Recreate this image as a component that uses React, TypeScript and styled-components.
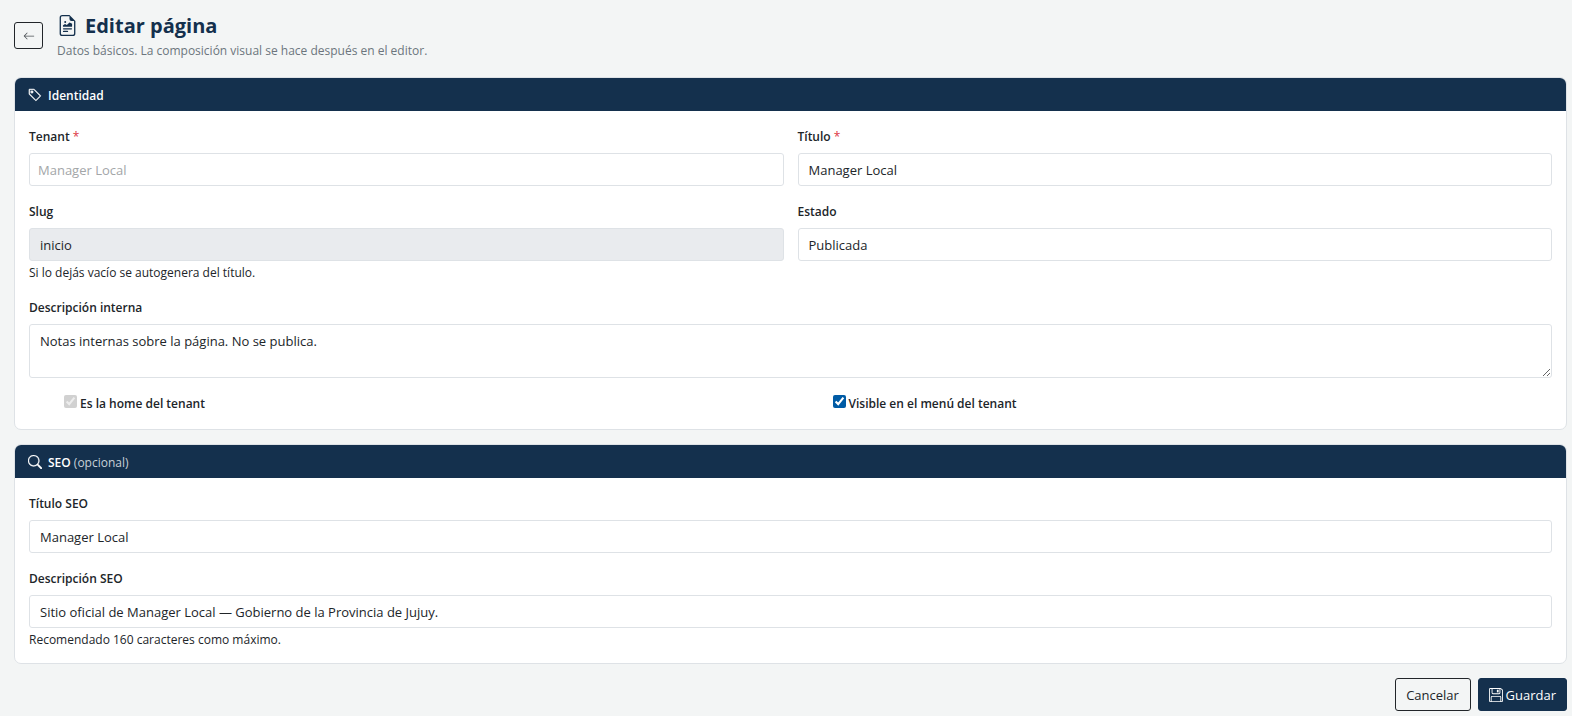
import React from 'react';
import styled, { createGlobalStyle, css } from 'styled-components';
import { BsArrowLeft, BsFileEarmarkRichtext, BsFloppy, BsSearch, BsTag } from 'react-icons/bs';

const GlobalStyle = createGlobalStyle`
  *, *::before, *::after { box-sizing: border-box; }
  body {
    margin: 0;
    background: #f3f5f5;
    color: #212529;
    font-family: "Segoe UI", "Open Sans", "Noto Sans", sans-serif;
    font-size: 13px;
    line-height: 21px;
  }
`;

const Page = styled.form`
  display: flex;
  flex-direction: column;
  gap: 14px;
  padding: 13px 5px 5px 14px;
`;

const PageHeader = styled.header`
  display: flex;
  align-items: flex-start;
  gap: 14px;
  padding-bottom: 2px;
`;

const BackButton = styled.button`
  display: flex;
  align-items: center;
  justify-content: center;
  width: 29px;
  height: 27px;
  margin-top: 9px;
  padding: 0;
  border: 1px solid #212529;
  border-radius: 3px;
  background: transparent;
  color: #4b5054;
`;

const Title = styled.h1`
  display: flex;
  align-items: center;
  gap: 7px;
  margin: 0 0 3px;
  color: #14304d;
  font-size: 20px;
  font-weight: 700;
  line-height: 25px;
`;

const Subtitle = styled.p`
  margin: 0;
  color: #6c757d;
  font-size: 12px;
  line-height: 20px;
`;

const Card = styled.section`
  overflow: hidden;
  border: 1px solid #dee2e6;
  border-radius: 7px;
  background: #fff;
`;

const CardHeader = styled.h2`
  display: flex;
  align-items: center;
  gap: 6px;
  height: 33px;
  margin: 0;
  padding: 1px 13px 0;
  background: #14304d;
  color: #fff;
  font-size: 12px;
  font-weight: 600;
`;

const Optional = styled.span`
  color: #c8d0d8;
  font-weight: 400;
`;

const CardBody = styled.div`
  display: grid;
  grid-template-columns: repeat(2, minmax(0, 1fr));
  gap: 14px;
  padding: 14px;
`;

const Field = styled.div<{ $wide?: boolean }>`
  display: flex;
  flex-direction: column;
  ${({ $wide }) => $wide && 'grid-column: 1 / -1;'}
`;

const Label = styled.label`
  margin-bottom: 5px;
  font-size: 12px;
  font-weight: 600;
  line-height: 23px;
`;

const Required = styled.span`
  color: #dc3545;
  font-weight: 400;
`;

const control = css`
  width: 100%;
  margin: 0;
  border: 1px solid #dee2e6;
  border-radius: 3px;
  background: #fff;
  color: #212529;
  font: inherit;
`;

const Input = styled.input`
  ${control}
  height: 33px;
  padding: 0 10px;
  &:disabled { background: #e9ebee; }
`;

const Select = styled.select<{ $compact?: boolean }>`
  ${control}
  appearance: none;
  height: 33px;
  padding: 1px ${({ $compact }) => ($compact ? 8 : 10)}px 0;
  &:disabled { color: #a3a6a8; opacity: 1; }
`;

const TextArea = styled.textarea`
  ${control}
  height: 54px;
  padding: 6px 10px;
  resize: vertical;
`;

const Help = styled.small`
  margin-top: 3px;
  font-size: 12px;
  line-height: 18px;
`;

const Check = styled.div`
  display: flex;
  align-items: flex-start;
  gap: 3px;
  height: 23px;
  padding-left: 35px;
`;

const CheckBox = styled.input`
  width: 13px;
  height: 13px;
  margin: 3px 0;
  accent-color: #005ba5;
`;

const CheckLabel = styled.label`
  font-size: 12px;
  font-weight: 600;
  line-height: 23px;
`;

const Actions = styled.div`
  display: flex;
  justify-content: flex-end;
  gap: 7px;
`;

const Button = styled.button<{ $primary?: boolean }>`
  display: flex;
  align-items: center;
  justify-content: center;
  gap: 3px;
  height: 33px;
  min-width: ${({ $primary }) => ($primary ? 89 : 76)}px;
  padding: 1px 10px 0;
  border: 1px solid ${({ $primary }) => ($primary ? '#14304d' : '#212529')};
  border-radius: 3px;
  background: ${({ $primary }) => ($primary ? '#14304d' : 'transparent')};
  color: ${({ $primary }) => ($primary ? '#fff' : '#212529')};
  font: inherit;
`;

export default function App() {
  return (
    <>
      <GlobalStyle />
      <Page onSubmit={(e) => e.preventDefault()}>
        <PageHeader>
          <BackButton type="button" aria-label="Volver">
            <BsArrowLeft size={12} />
          </BackButton>
          <div>
            <Title>
              <BsFileEarmarkRichtext size={21} />
              Editar página
            </Title>
            <Subtitle>Datos básicos. La composición visual se hace después en el editor.</Subtitle>
          </div>
        </PageHeader>

        <Card>
          <CardHeader>
            <BsTag size={14} strokeWidth={0.4} />
            Identidad
          </CardHeader>
          <CardBody>
            <Field>
              <Label htmlFor="tenant">
                Tenant <Required>*</Required>
              </Label>
              <Select id="tenant" $compact disabled defaultValue="local">
                <option value="local">Manager Local</option>
              </Select>
            </Field>
            <Field>
              <Label htmlFor="titulo">
                Título <Required>*</Required>
              </Label>
              <Input id="titulo" defaultValue="Manager Local" />
            </Field>
            <Field>
              <Label htmlFor="slug">Slug</Label>
              <Input id="slug" disabled defaultValue="inicio" />
              <Help>Si lo dejás vacío se autogenera del título.</Help>
            </Field>
            <Field>
              <Label htmlFor="estado">Estado</Label>
              <Select id="estado" defaultValue="publicada">
                <option value="publicada">Publicada</option>
                <option value="borrador">Borrador</option>
              </Select>
            </Field>
            <Field $wide>
              <Label htmlFor="descripcion">Descripción interna</Label>
              <TextArea id="descripcion" defaultValue="Notas internas sobre la página. No se publica." />
            </Field>
            <Check>
              <CheckBox type="checkbox" id="home" defaultChecked disabled />
              <CheckLabel htmlFor="home">Es la home del tenant</CheckLabel>
            </Check>
            <Check>
              <CheckBox type="checkbox" id="visible" defaultChecked />
              <CheckLabel htmlFor="visible">Visible en el menú del tenant</CheckLabel>
            </Check>
          </CardBody>
        </Card>

        <Card>
          <CardHeader>
            <BsSearch size={14} strokeWidth={0.4} />
            <span>
              SEO <Optional>(opcional)</Optional>
            </span>
          </CardHeader>
          <CardBody>
            <Field $wide>
              <Label htmlFor="seo-titulo">Título SEO</Label>
              <Input id="seo-titulo" defaultValue="Manager Local" />
            </Field>
            <Field $wide>
              <Label htmlFor="seo-descripcion">Descripción SEO</Label>
              <Input
                id="seo-descripcion"
                defaultValue="Sitio oficial de Manager Local — Gobierno de la Provincia de Jujuy."
              />
              <Help>Recomendado 160 caracteres como máximo.</Help>
            </Field>
          </CardBody>
        </Card>

        <Actions>
          <Button type="button">Cancelar</Button>
          <Button type="submit" $primary>
            <BsFloppy size={14} />
            Guardar
          </Button>
        </Actions>
      </Page>
    </>
  );
}
